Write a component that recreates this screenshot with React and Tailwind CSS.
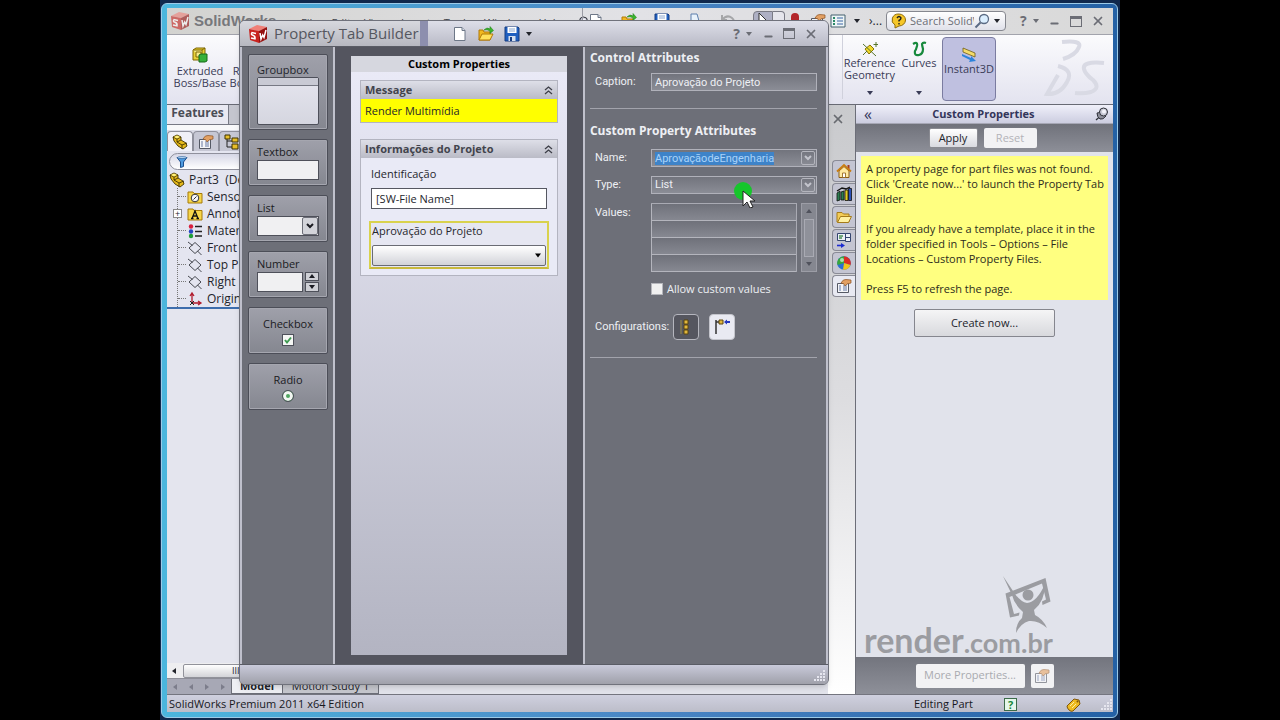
import { useEffect, useRef } from "react";
import { Minus, X } from "lucide-react";

const Caret = ({ className = "" }) => (
  <svg className={"h-1 w-[6px] shrink-0 " + className} viewBox="0 0 6 4" fill="currentColor" aria-hidden="true">
    <path d="M0 0h6L3 4z" />
  </svg>
);

const Cube = ({ className = "" }) => (
  <svg className={"h-5 w-5 shrink-0 " + className} viewBox="0 0 20 20" aria-hidden="true">
    <path d="M1 5 9 1l10 2-8 4z" fill="#f08078" />
    <path d="M1 5l10 2v12L2 16z" fill="#c8231f" />
    <path d="M11 7l8-4v12l-8 4z" fill="#96100f" />
    <path d="M8 9.500 4 8.600q-1.500 2 1 2.700t2 3.500L3 14M12 9l1 6 1.700-4 1.300 2.500L18 6" fill="none" stroke="#fff" strokeWidth="1.500" />
  </svg>
);

const PageIcon = () => (
  <svg className="h-4 w-4 shrink-0" viewBox="0 0 16 16" aria-hidden="true">
    <path d="M2.500 1.500h7.500l3 3v10H2.500z" fill="#fff" stroke="#6d7787" />
    <path d="M10 1.500v3h3" fill="#d5dae5" stroke="#6d7787" />
  </svg>
);

const OpenIcon = () => (
  <svg className="h-4 w-4 shrink-0" viewBox="0 0 16 16" aria-hidden="true">
    <path d="M1 14V4h4l1 2h6v8z" fill="#f1b81f" stroke="#b07808" />
    <path d="M1 14 4 8h11l-3 6z" fill="#ffe05c" stroke="#b07808" />
    <path d="M6 4q3-3.500 6-1V.500l3.500 4-3.500 3V5q-3-2-6-1z" fill="#3bb52c" stroke="#1c7c16" strokeWidth=".5" />
  </svg>
);

const SaveIcon = () => (
  <svg className="h-4 w-4 shrink-0" viewBox="0 0 16 16" aria-hidden="true">
    <path d="M1 1h13l1 1v13H1z" fill="#1f5fc0" stroke="#173c80" />
    <path d="M3.500 1h9v6h-9z" fill="#fff" />
    <path d="M5 3h6M5 5h6" stroke="#8ba6cf" />
    <path d="M4.500 10h7v5h-7z" fill="#d5dfee" />
    <path d="M6 11h2v4H6z" fill="#173c80" />
  </svg>
);

const PrintIcon = () => (
  <svg className="h-4 w-4 shrink-0" viewBox="0 0 16 16" aria-hidden="true">
    <path d="M4 1h6l2 7H4z" fill="#e9f2fb" stroke="#5c7fae" />
    <path d="M2 8h12v5H2z" fill="#9db2cb" stroke="#5c7fae" />
  </svg>
);

const UndoIcon = () => (
  <svg className="h-4 w-4 shrink-0" viewBox="0 0 16 16" fill="none" stroke="#a5a6a8" strokeWidth="2" aria-hidden="true">
    <path d="M2 2v5h5M2 7q5-6 10-2t-1 9" />
  </svg>
);

const PinIcon = () => (
  <svg className="h-[14px] w-[14px] shrink-0" viewBox="0 0 14 14" aria-hidden="true">
    <path d="M1 13 5 9.500" stroke="#2e3038" strokeWidth="1.300" />
    <path d="M2 6q2 .5 3-2l6 5q-3 4-6 3-3-2-3-6z" fill="#8f909c" stroke="#2e3038" />
    <circle cx="8.500" cy="5" r="4" fill="#c9cad6" stroke="#2e3038" />
    <circle cx="9" cy="4.500" r="2" fill="#f4f4fa" />
  </svg>
);

const PartIcon = () => (
  <svg className="h-4 w-4 shrink-0" viewBox="0 0 16 16" stroke="#3f3200" strokeWidth=".9" aria-hidden="true">
    <path d="M1 3l4-2 4 2v3l5 3 1 3-4 3-5-3-4-5z" fill="#e5b91b" />
    <path d="M1 3l4 2v3l5 3v4M5 5l4-2M10 11l5-2M5 8l4-2" fill="none" />
    <path d="M2 3l3-1.500L8 3 5 4.500z" fill="#fff07a" stroke="none" />
  </svg>
);

const FormHandIcon = () => (
  <svg className="h-4 w-4 shrink-0" viewBox="0 0 16 16" aria-hidden="true">
    <path d="M1.500 5.500h11v9h-11z" fill="#f4f5f8" stroke="#555965" />
    <path d="M3 8h2M3 10h2M3 12h2M7 8h4M7 10h4M7 12h4" stroke="#6779a3" />
    <path d="M5 5q2-4 5-3.500L15 2v3l-4 1-2 2-1-2z" fill="#e2a063" stroke="#8b5222" strokeWidth=".7" />
  </svg>
);

const ConfigIcon = () => (
  <svg className="h-4 w-4 shrink-0" viewBox="0 0 16 16" aria-hidden="true">
    <path d="M3 2v11h5M3 7h5" fill="none" stroke="#222" />
    <path d="M1 1h5v4H1zM8 4h6v4H8zM8 10h6v5H8z" fill="#e8bf2a" stroke="#3f3200" />
  </svg>
);

const FunnelIcon = () => (
  <svg className="h-3 w-3 shrink-0" viewBox="0 0 12 12" aria-hidden="true">
    <path d="M1 1.500h10L7.500 6v4.500l-3 1V6z" fill="#4e9be0" stroke="#1d4f8d" />
    <ellipse cx="6" cy="1.600" rx="4.500" ry="1" fill="#bfe0fa" stroke="#1d4f8d" strokeWidth=".6" />
  </svg>
);

const SensorIcon = () => (
  <svg className="h-4 w-4 shrink-0" viewBox="0 0 16 16" aria-hidden="true">
    <path d="M1 3h5l1 1.500h8V14H1z" fill="#f7d64a" stroke="#a57b0a" />
    <circle cx="8" cy="9" r="3.800" fill="#f6f7fb" stroke="#333" />
    <path d="M6.500 10.500l3-3" stroke="#333" />
  </svg>
);

const AnnotationIcon = () => (
  <svg className="h-4 w-4 shrink-0" viewBox="0 0 16 16" aria-hidden="true">
    <path d="M1 3h5l1 1.500h8V14H1z" fill="#f7d64a" stroke="#a57b0a" />
    <path d="M5 12.500 8 5l3 7.500M6 10h4M4 12.500h2.500M9.500 12.500H12" fill="none" stroke="#111" strokeWidth="1.300" />
  </svg>
);

const MaterialIcon = () => (
  <svg className="h-4 w-4 shrink-0" viewBox="0 0 16 16" aria-hidden="true">
    <circle cx="4" cy="3.500" r="2.200" fill="#d8203e" />
    <circle cx="4" cy="8.500" r="2.200" fill="#2545c4" />
    <circle cx="4" cy="13" r="2.200" fill="#1f9d38" />
    <path d="M8 3.500h7M8 8.500h7M8 13h7" stroke="#222" strokeWidth="1.500" />
  </svg>
);

const PlaneIcon = () => (
  <svg className="h-4 w-4 shrink-0" viewBox="0 0 16 16" fill="none" stroke="#33363d" strokeWidth=".9" aria-hidden="true">
    <path d="M8 2.500 14 8l-6 5.500L2 8zM1 2l4.500 3.500M10.500 11l4 4" />
  </svg>
);

const OriginIcon = () => (
  <svg className="h-4 w-4 shrink-0" viewBox="0 0 16 16" fill="none" aria-hidden="true">
    <path d="M5 12V3M3 5l2-3 2 3M5 12h8M11 10l3 2-3 2" stroke="#b01b2d" strokeWidth="1.300" />
    <path d="M3 10l4 4M7 10l-4 4" stroke="#222" />
  </svg>
);

const HouseIcon = () => (
  <svg className="h-4 w-4 shrink-0" viewBox="0 0 16 16" aria-hidden="true">
    <path d="M11.500 2h2v4h-2z" fill="#a33a22" />
    <path d="M3 8l5-4.500L13 8v6.500H3z" fill="#ffe9a0" stroke="#8d5c12" />
    <path d="M1 8.500 8 2l7 6.500" fill="none" stroke="#c97d12" strokeWidth="1.800" />
    <path d="M6.500 10h3v4.500h-3z" fill="#fff" stroke="#8d5c12" strokeWidth=".8" />
  </svg>
);

const LibraryIcon = () => (
  <svg className="h-4 w-4 shrink-0" viewBox="0 0 16 16" aria-hidden="true">
    <path d="M1 7l3-2v9l-3 1zM5 6l3-1v9H5z" fill="#2c7c50" stroke="#111" strokeWidth=".8" />
    <path d="M9 4h3v10.500H9z" fill="#e3cc22" stroke="#111" strokeWidth=".8" />
    <path d="M12.500 2.500h3v12h-3z" fill="#2c51b8" stroke="#111" strokeWidth=".8" />
    <path d="M1 5l5-3 4 1 4-2" fill="none" stroke="#111" strokeWidth="1.300" />
  </svg>
);

const FolderIcon = () => (
  <svg className="h-4 w-4 shrink-0" viewBox="0 0 16 16" aria-hidden="true">
    <path d="M1 13V3.500h5L7.500 5H13v8z" fill="#f3cc57" stroke="#a57b1a" />
    <path d="M1.500 13.500 4.500 7.500h11l-3 6z" fill="#fff0a0" stroke="#a57b1a" />
  </svg>
);

const PaletteIcon = () => (
  <svg className="h-4 w-4 shrink-0" viewBox="0 0 16 16" aria-hidden="true">
    <path d="M1.500 1.500h8v7h-8zM9.500 1.500h5v4h-5zM9.500 5.500h5v4h-5z" fill="#eef1f8" stroke="#34456f" />
    <path d="M3 4h4M3 6h3" stroke="#4b8f55" strokeWidth="1.500" />
    <path d="M1 13.500h5" stroke="#1c2bd0" strokeWidth="1.600" />
    <path d="M5 11l4 2.500L5 16z" fill="#1c2bd0" />
  </svg>
);

const BallIcon = () => (
  <svg className="h-4 w-4 shrink-0" viewBox="0 0 16 16" aria-hidden="true">
    <circle cx="8" cy="8" r="6.800" fill="#2b6fd2" />
    <path d="M8 8 8 1.200A6.800 6.800 0 0 0 1.500 10z" fill="#3aa73b" />
    <path d="M8 8V1.200A6.800 6.800 0 0 1 14.500 10z" fill="#dc2c22" />
    <path d="M8 8l6.500 2A6.800 6.800 0 0 1 7 14.700z" fill="#f0c419" />
    <circle cx="6" cy="5" r="2" fill="#fff" opacity=".6" />
  </svg>
);

const ChevronsUp = () => (
  <svg className="h-[9px] w-[9px]" viewBox="0 0 9 9" fill="none" stroke="#3d3f48" strokeWidth="1.300" aria-hidden="true">
    <path d="M1 4l3.500-3L8 4M1 8l3.500-3L8 8" />
  </svg>
);

const ChevronDown = () => (
  <svg className="h-[6px] w-2" viewBox="0 0 8 6" fill="none" stroke="currentColor" strokeWidth="2" aria-hidden="true">
    <path d="M1 1l3 3 3-3" />
  </svg>
);

const Grip = () => (
  <svg className="h-3 w-3" viewBox="0 0 12 12" fill="#e6e6ef" aria-hidden="true">
    <path d="M9 0h2v2H9zM9 3h2v2H9zM9 6h2v2H9zM9 9h2v2H9zM6 3h2v2H6zM6 6h2v2H6zM6 9h2v2H6zM3 6h2v2H3zM3 9h2v2H3zM0 9h2v2H0z" />
  </svg>
);

const WindowButtons = () => (
  <div className="flex items-center text-[#6b6d75]">
    <button aria-label="Help" className="flex items-center gap-[6px] text-[14px] leading-4 font-bold">?<Caret /></button>
    <button aria-label="Minimize" className="ml-2 flex h-4 w-4 items-end justify-center"><Minus size={11} strokeWidth={4} /></button>
    <button aria-label="Maximize" className="ml-[7px] h-[11px] w-3 border border-t-[3px] border-[#6b6d75]" />
    <button aria-label="Close" className="ml-2 flex h-4 w-4 items-center justify-center"><X size={14} strokeWidth={3} /></button>
  </div>
);

const tree = [
  ["Sensors", SensorIcon],
  ["Annotations", AnnotationIcon],
  ["Material <not specified>", MaterialIcon],
  ["Front Plane", PlaneIcon],
  ["Top Plane", PlaneIcon],
  ["Right Plane", PlaneIcon],
  ["Origin", OriginIcon],
];

function TitleBar() {
  return (
    <header className="flex h-[26px] shrink-0 items-center bg-gradient-to-r from-[#d3d3d0] via-[#e2e2e6] to-[#d9d9d9]">
      <div className="flex w-[126px] shrink-0 items-center gap-1 pl-[3px] font-['Liberation_Sans'] text-[15px] font-bold text-[#77787c]">
        <Cube className="opacity-60" />
        <span>SolidWorks</span>
      </div>
      <nav className="flex min-w-0 flex-1 items-center gap-[13px] pt-1 pr-[6px] pl-2 text-[11px] text-[#44464e]">
        {["File", "Edit", "View", "Insert", "Tools", "Window", "Help"].map((m) => (
          <a key={m} href="#" className="leading-4">{m}</a>
        ))}
        <button aria-label="Pin menu" className="ml-auto"><PinIcon /></button>
      </nav>
      <div className="flex h-full w-[269px] shrink-0 items-center gap-[17px] border-l border-[#9a9ba3] pl-[5px]">
        <PageIcon /><OpenIcon /><SaveIcon /><PrintIcon /><UndoIcon />
        <div className="flex items-center">
          <span className="flex h-5 w-5 justify-center rounded-l border border-[#7a7b85] bg-[#aeb0c4]">
            <svg className="h-4 w-4" viewBox="0 0 16 16" fill="#fff" stroke="#333" aria-hidden="true"><path d="M4 1v11l3-3h5z" /></svg>
          </span>
          <span className="h-5 w-3 rounded-r border border-l-0 border-[#7a7b85] bg-[#e6e6ec]" />
          <span className="mr-[11px] ml-[6px] h-4 w-2 rounded bg-[#b3262a]" />
          <FormHandIcon />
          <svg className="ml-1 h-4 w-4 shrink-0" viewBox="0 0 16 16" aria-hidden="true">
            <path d="M1 2h14v12H1z" fill="#eef5f6" stroke="#44606e" />
            <path d="M3 4h2v2H3zM3 7h2v2H3zM3 10h2v2H3z" fill="#2b8a66" />
            <path d="M7 5h6M7 8h6M7 11h6" stroke="#3864a4" />
          </svg>
        </div>
      </div>
      <div className="flex w-[262px] shrink-0 items-center">
        <Caret className="mr-[9px] ml-[3px]" />
        <span className="mr-1 text-[12px]">›...</span>
        <label className="flex h-5 w-[120px] items-center rounded border border-[#85878f] bg-gradient-to-b from-white to-[#e0e1ea] px-1">
          <svg className="h-4 w-4 shrink-0" viewBox="0 0 16 16" aria-hidden="true">
            <path d="M8 1a6.500 6 0 0 1 0 12l-4 2v-3A6.500 6 0 0 1 8 1z" fill="#f6c72a" stroke="#8f6c0c" />
            <path d="M6 5q2-3 4 0 0 1.500-2 2.500v1M8 10v1.500" fill="none" stroke="#222" strokeWidth="1.400" />
          </svg>
          <input aria-label="Search SolidWorks" defaultValue="Search SolidWorks" className="ml-[3px] w-[64px] bg-transparent text-[11px] text-[#6c6e76] outline-none" />
          <svg className="h-4 w-4 shrink-0" viewBox="0 0 16 16" fill="#dcefff" stroke="#5b6b84" strokeWidth="1.300" aria-hidden="true">
            <circle cx="10" cy="6" r="4.500" /><path d="M6.500 9.500 1.500 14.500" strokeWidth="2" />
          </svg>
          <Caret className="ml-1" />
        </label>
        <div className="ml-[14px]"><WindowButtons /></div>
      </div>
    </header>
  );
}

function Ribbon() {
  return (
    <div className="flex h-[70px] shrink-0 justify-between overflow-hidden border-t border-[#a2a3ac] bg-gradient-to-b from-[#fbfbfd] to-[#e3e3ef] text-[11px] leading-3 text-[#3a3c57]">
      <div className="flex gap-1 pt-3 pl-[7px] text-center">
        <button className="flex w-[52px] flex-col items-center gap-[2px]">
          <svg className="h-4 w-4" viewBox="0 0 16 16" stroke="#7d6500" aria-hidden="true">
            <path d="M1 3l3-2h9v10l-3 2H1z" fill="#e8d137" /><path d="M1 3h9v10M10 3l3-2M4 5h5v5H4z" fill="#f7ec8a" />
            <path d="M7 8l2-1h6v7l-2 1H7z" fill="#37b03a" stroke="#176b19" />
          </svg>
          <span>Extruded Boss/Base</span>
        </button>
        <button className="flex w-[52px] flex-col items-center gap-[2px]"><span className="h-4" /><span>Revolved Boss/Base</span></button>
      </div>
      <div className="flex w-[284px] items-start">
        <button className="ml-[13px] flex h-[64px] w-[54px] flex-col items-center border-l border-[#d0d1dc] pt-[6px]">
          <svg className="h-4 w-4" viewBox="0 0 16 16" aria-hidden="true">
            <path d="M3 8l5-4 4 4-5 5z" fill="#f0d92c" stroke="#8a7507" /><path d="M1 3l13 12M14 1v5M11.500 3.500h5M1 14l4-4" stroke="#56742b" />
          </svg>
          <span>Reference Geometry</span>
          <Caret className="mt-auto mb-1" />
        </button>
        <button className="flex h-[64px] w-[46px] flex-col items-center pt-[6px]">
          <svg className="h-4 w-4" viewBox="0 0 16 16" fill="none" stroke="#17893c" strokeWidth="2.200" aria-hidden="true">
            <path d="M2 3q5-3 4 2-1 4-2 5-1 5 4 4 4-1 4-6-1-4-1-5 1-2 4-1" />
          </svg>
          <span>Curves</span>
          <Caret className="mt-auto mb-1" />
        </button>
        <button className="mt-[2px] flex h-[64px] w-[54px] flex-col items-center rounded border border-[#7b7ca0] bg-[#bfc0e0] pt-[9px]">
          <svg className="h-4 w-4" viewBox="0 0 16 16" aria-hidden="true">
            <path d="M2 1l12 5v4L2 5z" fill="#f4dc6a" stroke="#6f5c14" strokeWidth=".8" /><path d="M1 7l9 4V9l5 5-7 1 1-2-8-4z" fill="#2b83dc" />
          </svg>
          <span>Instant3D</span>
        </button>
        <svg className="mt-1 ml-[46px] h-[62px] w-[66px]" viewBox="0 0 66 62" fill="none" stroke="#d9dae4" strokeWidth="4" aria-hidden="true">
          <path d="M20 3q20-2 17 5-3 8-16 12M16 27q16 4 9 16Q18 56 5 55L16 36M62 24q-22-2-20 6 1 5 9 11 8 8-2 12-7 2-16 1" />
        </svg>
      </div>
    </div>
  );
}

function FeaturePanel() {
  return (
    <aside className="flex w-[200px] flex-col text-[12px] text-[#22242b]">
      <div className="flex h-5 shrink-0 bg-[#c4c5ce] text-[12px] font-bold text-[#4b4d56]">
        <button className="w-[62px] border-r border-b border-[#777985] bg-[#e9e9f2] pb-[4px] leading-[14px]">Features</button>
        <button className="flex-1 border-b border-[#777985]">Sketch</button>
      </div>
      <div className="mt-[5px] flex h-[21px] shrink-0 items-end bg-[#dcdde8]">
        {[PartIcon, FormHandIcon, ConfigIcon].map((Icon, i) => (
          <button key={i} aria-label={["Features", "Properties", "Configurations"][i]} className={"flex h-5 w-[26px] items-center justify-center rounded-t border border-b-0 border-[#8f909c] " + (i ? "bg-[#c6c7d4]" : "bg-[#f0f0f8]")}>
            <Icon />
          </button>
        ))}
      </div>
      <div className="flex flex-col border-b-2 border-[#3d6dad] bg-[#e4e5f0] pl-[2px]">
        <label className="mt-[2px] mb-px flex h-[17px] items-center rounded-full border border-[#8f909c] bg-gradient-to-b from-[#d6d7e6] to-white pl-[6px]">
          <FunnelIcon /><input aria-label="Filter" className="w-full bg-transparent outline-none" />
        </label>
        <div className="flex h-[17px] items-center gap-1 whitespace-nowrap"><PartIcon />Part3&nbsp; (Default)</div>
        <ul className="ml-2 border-l border-dotted border-[#777]">
          {tree.map(([name, Icon]) => (
            <li key={name} className="flex h-[17px] items-center whitespace-nowrap">
              {name === "Annotations" ? (
                <button aria-label="Expand" className="-ml-[5px] mr-[5px] flex h-[9px] w-[9px] items-center justify-center border border-[#888] bg-white text-[9px] leading-none">+</button>
              ) : (
                <span className="mr-px w-2 border-t border-dotted border-[#777]" />
              )}
              <Icon />
              <span className="ml-1">{name}</span>
            </li>
          ))}
        </ul>
      </div>
      <div className="flex-1 bg-[#e4e5ee]" />
    </aside>
  );
}

const sideTabs = [["Resources", HouseIcon], ["Design Library", LibraryIcon], ["File Explorer", FolderIcon], ["View Palette", PaletteIcon], ["Appearances", BallIcon], ["Custom Properties", FormHandIcon]];

function TaskPane() {
  return (
    <aside className="flex w-[285px] shrink-0">
      <div className="flex w-[28px] flex-col border-r border-[#6c6e78] bg-gradient-to-b from-[#c9cacd] via-[#dddde0] to-white pl-[4px]">
        <button aria-label="Close view" className="mt-[6px] mb-[33px] -ml-px h-4 w-4 text-[#686a70]"><X size={14} strokeWidth={3} /></button>
        {sideTabs.map(([name, Icon], i) => (
          <button key={name} aria-label={name} className={"mb-px flex h-[22px] w-[23px] shrink-0 items-center justify-center rounded-l border border-r-0 border-[#8a8b96] " + (i === 5 ? "bg-[#e8e9f2]" : "bg-[#c4c5d2]")}>
            <Icon />
          </button>
        ))}
      </div>
      <section className="flex min-w-0 flex-1 flex-col bg-[#e1e3eb] text-[11px]">
        <div className="flex h-[19px] shrink-0 items-center border-b border-[#a6a7b5] bg-gradient-to-b from-[#f0f0fa] to-[#cccde0] pr-1 pl-2 text-[#33355a]">
          <button aria-label="Collapse" className="text-[16px] leading-3">«</button>
          <h2 className="flex-1 text-center font-bold">Custom Properties</h2>
          <button aria-label="Pin"><PinIcon /></button>
        </div>
        <div className="flex h-[28px] shrink-0 items-center justify-center gap-[6px] bg-gradient-to-b from-[#70727b] to-[#8d8f98] pr-1">
          <button className="h-5 w-[49px] rounded-xs border border-[#8a8b92] bg-gradient-to-b from-white to-[#d9dae0] leading-4">Apply</button>
          <button disabled className="h-5 w-[53px] rounded-xs bg-[#f2f2f4] leading-4 text-[#b2b3b8]">Reset</button>
        </div>
        <div className="mx-[5px] mt-1 bg-[#ffff80] pt-[5px] pb-1 pl-[5px] leading-[15px] text-[#2c2c1c]">
          <p>A property page for part files was not found. Click 'Create now...' to launch the Property Tab Builder.</p>
          <p className="mt-[15px]">If you already have a template, place it in the folder specified in Tools – Options – File Locations – Custom Property Files.</p>
          <p className="mt-[15px]">Press F5 to refresh the page.</p>
        </div>
        <button className="mx-auto mt-[9px] h-[28px] w-[141px] shrink-0 rounded-xs border border-[#85868e] bg-gradient-to-b from-[#f5f5f6] to-[#d8d9dd]">Create now...</button>
        <div className="mt-auto flex flex-col pr-[62px] pl-2 text-[#9b9ca1]">
          <svg className="-mb-2 h-[58px] w-[48px] self-end" viewBox="0 0 48 58" aria-hidden="true">
            <path d="M2.500 17.500 42.500 2l5 23.500-8 3.500-.5-3.500 4-2-4-16L6.500 21l4.500 17 5.500-1.500-.5 3-9 2z" fill="currentColor" />
            <path d="M0 0l12 18q6 8 12 9 10-1 18-19 0 17-11 26l1 5q8 4 12 13-9-8-18-7-8 2-13 12 0-10 6-15l1-6Q11 28 9 19z" fill="currentColor" />
            <circle cx="25" cy="19" r="5.500" fill="currentColor" />
          </svg>
          <div className="font-['Lato'] text-[34px] leading-7 font-bold whitespace-nowrap">render<span className="text-[27px]">.com.br</span></div>
        </div>
        <div className="flex h-[37px] shrink-0 items-center justify-center gap-[6px] bg-gradient-to-b from-[#73757e] to-[#8e9099]">
          <button disabled className="h-6 w-[109px] rounded-xs bg-[#f2f2f4] text-[#a9aab0]">More Properties...</button>
          <button disabled aria-label="Property Tab Builder" className="flex h-6 w-[23px] items-center justify-center rounded-xs bg-[#f2f2f4]"><span className="opacity-60"><FormHandIcon /></span></button>
        </div>
      </section>
    </aside>
  );
}

function Tile({ children, center }) {
  return (
    <div className={"flex min-h-[47px] flex-col justify-center rounded-xs border border-[#4c4e58] bg-gradient-to-b from-[#9fa0aa] to-[#858790] px-2 pb-[5px] leading-4 text-[#1a1b22] shadow-[inset_0_0_0_1px_#a5a6af] " + (center ? "items-center pt-[5px]" : "items-start pt-[3px]")}>
      {children}
    </div>
  );
}

function ControlPalette() {
  const field = "block h-5 border border-[#4e505a] bg-[#f0f0f2]";
  return (
    <aside className="flex w-[93px] shrink-0 flex-col gap-[9px] border-r-2 border-[#c0c1cc] bg-[#6d6f78] pt-[7px] pr-[5px] pl-[6px] text-[11px]">
      <div className="flex h-[76px] flex-col rounded-xs border border-[#4c4e58] bg-gradient-to-b from-[#9fa0aa] to-[#858790] px-2 pt-[7px] leading-4 shadow-[inset_0_0_0_1px_#a5a6af]">
        Groupbox
        <span className="-mt-px flex h-12 w-[62px] flex-col rounded-xs border border-[#4e505a] bg-gradient-to-b from-[#e5e5ee] to-[#d5d6e0]">
          <span className="h-2 border-b border-[#777984] bg-[#c9cad4]" />
        </span>
      </div>
      <Tile><label htmlFor="tb">Textbox</label><input id="tb" className={field + " w-[62px]"} /></Tile>
      <Tile>
        List
        <span className={field + " flex w-[62px] justify-end"}>
          <span className="flex h-full w-4 items-center justify-center rounded-xs border border-[#6c6e78] bg-[#d3d4da]"><ChevronDown /></span>
        </span>
      </Tile>
      <Tile>
        <label htmlFor="num">Number</label>
        <span className="flex gap-[2px]">
          <input id="num" className={field + " w-[46px]"} />
          <span className="flex flex-col gap-px">
            <button aria-label="Increase" className="flex h-[9px] w-[14px] items-center justify-center border border-[#4e505a] bg-[#cfd0d6]"><Caret className="rotate-180" /></button>
            <button aria-label="Decrease" className="flex h-[10px] w-[14px] items-center justify-center border border-[#4e505a] bg-[#cfd0d6]"><Caret /></button>
          </span>
        </span>
      </Tile>
      <Tile center>
        <label htmlFor="cb">Checkbox</label>
        <span className="relative mt-[2px] flex h-3 w-3">
          <input id="cb" type="checkbox" defaultChecked className="h-3 w-3 appearance-none border border-[#4e505a] bg-[#f4f6f4]" />
          <svg className="pointer-events-none absolute inset-0 h-3 w-3" viewBox="0 0 12 12" fill="none" stroke="#3f9b52" strokeWidth="2" aria-hidden="true"><path d="M3 6l2 2.500L9 3.500" /></svg>
        </span>
      </Tile>
      <Tile center>
        <label htmlFor="rd">Radio</label>
        <input id="rd" type="radio" defaultChecked className="mt-[2px] h-3 w-3 appearance-none rounded-full border border-[#4e505a] bg-[#4fa560] shadow-[inset_0_0_0_3px_#f2f6f2]" />
      </Tile>
    </aside>
  );
}

function GroupHeader({ children }) {
  return (
    <div className="flex h-[18px] items-center justify-between bg-gradient-to-b from-[#dedfe8] to-[#babbc6] pr-1 pl-1">
      <h3 className="text-[11px] font-bold text-[#42444d]">{children}</h3>
      <button aria-label="Collapse"><ChevronsUp /></button>
    </div>
  );
}

function FormPreview() {
  return (
    <section className="flex min-w-0 flex-[215] bg-[#54555f] pt-[9px] pr-4 pb-[9px] pl-4 text-[11px] text-[#25262c]">
      <div className="flex min-w-0 flex-1 flex-col bg-gradient-to-b from-[#ebebf8] to-[#b3b4c2]">
        <h2 className="h-4 bg-[#d6d7df] text-center leading-4 font-bold text-black">Custom Properties</h2>
        <div className="mx-[9px] mt-2 border border-[#b3b4c0]">
          <GroupHeader>Message</GroupHeader>
          <p className="h-[23px] bg-[#ffff00] pl-1 leading-[23px]">Render Multimídia</p>
        </div>
        <div className="mx-[9px] mt-4 border border-[#b3b4c0] bg-[#e9eaf6]">
          <GroupHeader>Informações do Projeto</GroupHeader>
          <div className="px-2 pb-[6px]">
            <label htmlFor="ident" className="mt-2 mb-[6px] block pl-[2px] leading-4">Identificação</label>
            <input id="ident" defaultValue="[SW-File Name]" className="ml-[2px] block h-[21px] w-[calc(100%-4px)] border border-[#555761] bg-white px-1 outline-none" />
            <div className="mt-3 border-2 border-[#d9d24d] border-b-[#c9b93c] bg-[#e6e7f2] px-px pb-px">
              <label htmlFor="aprov" className="mb-[6px] block leading-4">Aprovação do Projeto</label>
              <div className="relative flex">
                <select id="aprov" className="h-[21px] w-full appearance-none rounded-xs border border-[#6a6c74] bg-gradient-to-b from-white to-[#d2d3d9]"><option></option></select>
                <Caret className="pointer-events-none absolute top-2 right-[5px] h-[5px] w-2 text-black" />
              </div>
            </div>
          </div>
        </div>
      </div>
    </section>
  );
}

function Chevron() {
  return (
    <span className="pointer-events-none absolute top-[2px] right-[2px] flex h-[14px] w-[14px] items-center justify-center rounded-xs border border-[#b4b5bd] text-[#c3c4cc]">
      <ChevronDown />
    </span>
  );
}

function Attributes() {
  const name = useRef(null);
  useEffect(() => {
    name.current.focus();
    name.current.select();
  }, []);
  const box = "block h-[18px] w-full appearance-none border border-[#b0b1ba] bg-gradient-to-b from-[#72747d] to-[#8b8d96] px-[3px] outline-none";
  const row = "grid grid-cols-[56px_1fr] items-center";
  return (
    <section className="min-w-0 flex-[226] border-l-2 border-[#c0c1cc] bg-[#6d6f78] pt-[3px] pr-[9px] pl-[5px] font-['Roboto','Open_Sans',sans-serif] text-[11px] text-[#eeeff4]">
      <h2 className="font-['Open_Sans',sans-serif] text-[12px] leading-4 font-bold">Control Attributes</h2>
      <div className="border-b border-[#a2a3ac] pt-[7px] pb-[17px] pl-[5px]">
        <div className={row}>
          <label htmlFor="cap">Caption:</label>
          <input id="cap" defaultValue="Aprovação do Projeto" className={box} />
        </div>
      </div>
      <h2 className="mt-[14px] font-['Open_Sans',sans-serif] text-[12px] leading-4 font-bold">Custom Property Attributes</h2>
      <div className="flex flex-col gap-[9px] border-b border-[#a2a3ac] pt-[10px] pb-[17px] pl-[5px]">
        <div className={row}>
          <label htmlFor="name">Name:</label>
          <div className="relative">
            <input id="name" ref={name} defaultValue="AprovaçãodeEngenharia" className={box + " selection:bg-[#3e83c8] selection:text-[#a9d3fa]"} />
            <Chevron />
          </div>
        </div>
        <div className={row}>
          <label htmlFor="type">Type:</label>
          <div className="relative">
            <select id="type" className={box}><option>List</option></select>
            <Chevron />
            <svg className="pointer-events-none absolute top-[4px] left-[82px] h-7 w-6" viewBox="0 0 24 28" aria-hidden="true">
              <circle cx="10" cy="11" r="9" fill="#16c62b" />
              <path d="M10 11v15l4-4 3 6 3-1-3-6h5z" fill="#fff" stroke="#222" />
            </svg>
          </div>
        </div>
        <div className="grid grid-cols-[56px_1fr] items-start">
          <span className="leading-[20px]">Values:</span>
          <div className="flex gap-1">
            <div className="flex-1 border-t border-r border-[#a9aab3]">
              {[1, 2, 3, 4].map((n) => (
                <input key={n} aria-label={"Value " + n} className="block h-[17px] w-full border-b border-l border-[#b4b5bd] bg-gradient-to-b from-[#6f717a] to-[#868891] outline-none" />
              ))}
            </div>
            <div className="flex w-4 flex-col items-center justify-between border border-[#9c9da6] bg-[#858790] py-[5px] text-[#50525c]">
              <Caret className="rotate-180" />
              <span className="h-[38px] w-[10px] border border-[#a9aab3] bg-[#8f919a]" />
              <Caret />
            </div>
          </div>
        </div>
        <label className="ml-[56px] flex items-center gap-1 font-['Open_Sans',sans-serif] leading-4">
          <input type="checkbox" className="h-3 w-3 appearance-none border border-[#b5b6bc] bg-[#f0f0f0]" />
          Allow custom values
        </label>
        <div className="mt-2 flex items-center">
          <span className="w-[78px]">Configurations:</span>
          <button aria-label="Apply to this configuration" className="flex h-[26px] w-[26px] items-center justify-center rounded border border-[#b5b6be] bg-[#55565f]">
            <svg className="h-4 w-4" viewBox="0 0 16 16" aria-hidden="true">
              <path d="M3 1v14" stroke="#9a8a4c" /><path d="M6 1h4v4H6zM6 6h4v4H6zM6 11h4v4H6z" fill="#e1b83c" stroke="#5b4510" />
            </svg>
          </button>
          <button aria-label="Apply to all configurations" className="ml-[10px] flex h-[26px] w-[26px] items-center justify-center rounded border border-[#c4c5cc] bg-[#e9eaf2]">
            <svg className="h-4 w-4" viewBox="0 0 16 16" aria-hidden="true">
              <path d="M2 1v14M2 3h3" stroke="#333" strokeWidth="1.500" /><path d="M5 1h4v4H5z" fill="#e1b83c" stroke="#5b4510" />
              <path d="M10 3l3-2.500V2h3v2h-3v1.500z" fill="#2537bd" />
            </svg>
          </button>
        </div>
      </div>
    </section>
  );
}

function Builder() {
  return (
    <div role="dialog" aria-label="Property Tab Builder" className="absolute top-4 right-[288px] bottom-[32px] left-[77px] flex flex-col overflow-hidden rounded-md border border-[#70727c] bg-[#bfc0cc] shadow-md">
      <header className="flex h-[26px] shrink-0 items-center border-b border-[#5a5c65] bg-gradient-to-b from-[#dedfe9] to-[#b9bac6] pr-[9px]">
        <div className="flex h-full w-[188px] items-center gap-[6px] border-r-8 border-[#8d8fae] bg-gradient-to-b from-[#d7d8de] to-[#b7b8c0] pl-2">
          <Cube />
          <h1 className="text-[15px] whitespace-nowrap text-[#55575f]">Property Tab Builder</h1>
        </div>
        <div className="ml-6 flex flex-1 items-center gap-[10px]">
          <button aria-label="New"><PageIcon /></button>
          <button aria-label="Open"><OpenIcon /></button>
          <button aria-label="Save" className="flex items-center gap-[6px]"><SaveIcon /><Caret /></button>
        </div>
        <WindowButtons />
      </header>
      <div className="flex min-h-0 flex-1 px-[2px]">
        <ControlPalette />
        <FormPreview />
        <Attributes />
      </div>
      <footer className="flex h-5 shrink-0 items-end justify-end border-t border-[#5a5c65] bg-gradient-to-b from-[#c9cada] to-[#9fa0aa] pr-[2px] pb-[2px]"><Grip /></footer>
    </div>
  );
}

export default function App() {
  return (
    <div className="h-screen bg-black px-[12.5%] font-['Open_Sans','Noto_Sans',sans-serif] text-[#22242b]">
      <div className="h-full bg-[#10284c] pt-[3px] pr-[2px] pb-[2px] pl-px">
        <main className="relative flex h-full flex-col rounded-md border border-[#9ccbe8] bg-gradient-to-r from-[#4bb6dd] via-[#4a86c5] to-[#2461a5] pt-1 pr-1 pb-[5px] pl-[5px]">
          <TitleBar />
          <Ribbon />
          <div className="flex min-h-0 flex-1 border-t border-[#686a74] bg-[#f8f8fa]">
            <div className="flex min-w-0 flex-1 flex-col">
              <div className="flex min-h-0 flex-1"><FeaturePanel /></div>
              <div className="flex h-4 shrink-0 items-center border-b border-[#8d8e98] bg-[#eeeef0]">
                <Caret className="ml-1 rotate-90" />
                <span className="ml-[6px] h-[14px] w-[150px] rounded-xs border border-[#91929a] bg-gradient-to-b from-white to-[#d3d4d8] pl-12 text-[9px] leading-3">III</span>
              </div>
              <div className="flex h-[15px] shrink-0 items-start bg-[#e2e3eb] text-[11px]">
                <div className="flex h-full w-16 items-center justify-around bg-[#a7a8b5] text-[#7c7d8b]">
                  <Caret className="rotate-90" /><Caret className="rotate-90" /><Caret className="-rotate-90" /><Caret className="-rotate-90" />
                </div>
                <button className="h-full w-[52px] border-x border-b border-[#6c6e78] bg-[#eeeff4] font-bold leading-[14px]">Model</button>
                <button className="h-full w-24 border-r border-b border-[#6c6e78] bg-[#c6c7ce] leading-[14px]">Motion Study 1</button>
              </div>
            </div>
            <TaskPane />
          </div>
          <footer className="flex h-[18px] shrink-0 items-center border-t border-[#74757f] bg-gradient-to-b from-[#cfd0df] to-[#bcbdc9] pt-[2px] pl-[2px] text-[11px] text-[#17181d]">
            <span className="flex-1">SolidWorks Premium 2011 x64 Edition</span>
            <span className="mr-[31px]">Editing Part</span>
            <button aria-label="Quick tips" className="mr-[48px] flex h-[13px] w-[13px] items-center justify-center border border-[#3c6b49] bg-[#e5f7ea] text-[11px] leading-none font-bold text-[#17893c]">?</button>
            <svg className="mr-5 h-4 w-4" viewBox="0 0 16 16" aria-hidden="true">
              <path d="M2 9 9 2l5 1 1 4-7 7q-2 1-4-1t-2-4z" fill="#eebb22" stroke="#80560a" /><path d="M5 9l4-4M7 11l4-4" stroke="#fff0a0" /><circle cx="12.500" cy="4.500" r="1" fill="#80560a" />
            </svg>
            <Grip />
          </footer>
          <Builder />
        </main>
      </div>
    </div>
  );
}
